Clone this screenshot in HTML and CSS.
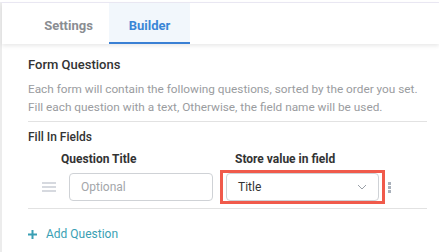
FILE: index.html
```html
<!DOCTYPE html>
<html lang="en">
<head>
    <meta charset="utf-8" />
    <meta name="viewport" content="width=device-width, initial-scale=1" />
    <title>Form Builder</title>
    <link rel="stylesheet" href="styles.css">
</head>
<body>

<div class="page">
    <div class="tabs">
        <div class="tab">Settings</div>
        <div class="tab active">Builder</div>
    </div>

    <div class="content">
        <div class="section">
            <h2 class="section-title">Form Questions</h2>
            <p class="section-desc">Each form will contain the following questions, sorted by the order you set.<br>Fill each question with a text, Otherwise, the field name will be used.</p>
        </div>

        <div class="fields">
            <h3 class="fields-title">Fill In Fields</h3>
            <div class="fields-head">
                <span class="head-question">Question Title</span>
                <span class="head-store">Store value in field</span>
            </div>
            <div class="field-row">
                <span class="drag-handle"><i></i><i></i><i></i></span>
                <input class="text-input" type="text" placeholder="Optional">
                <div class="highlight">
                    <div class="select">
                        <span>Title</span>
                        <svg width="10" height="6" viewBox="0 0 10 6"><path d="M1 1l4 4 4-4" fill="none" stroke="#9aa0a8" stroke-width="1"/></svg>
                    </div>
                </div>
                <span class="kebab"><i></i><i></i><i></i></span>
            </div>
        </div>

        <div class="add-question">
            <svg width="9" height="9" viewBox="0 0 9 9"><path d="M4.5 0v9M0 4.5h9" stroke="#3a9fb4" stroke-width="2"/></svg>
            <span>Add Question</span>
        </div>
    </div>
</div>

</body>
</html>
```

FILE: styles.css
```css
* {
    margin: 0;
    padding: 0;
    box-sizing: border-box;
}

html, body {
    width: 100%;
    height: 100%;
}

body {
    background-color: white;
    font-family: Roboto, "Liberation Sans", sans-serif;
    color: #333;
    overflow: hidden;
}

.page {
    margin-top: 2px;
    height: 250px;
    border-top: 1px solid #ebe9f4;
    border-left: 2px solid #ececec;
}

.tabs {
    display: flex;
    padding-left: 26px;
    box-shadow: 0 2px 4px rgba(0, 0, 0, 0.09);
}

.tab {
    width: 81px;
    height: 41px;
    padding-top: 6px;
    line-height: 33px;
    text-align: center;
    font-size: 13px;
    font-weight: 700;
    color: #8a8d92;
    border-bottom: 2px solid transparent;
}

.tab.active {
    background-color: #f2f7fc;
    color: #3a86d6;
    border-bottom-color: #3a80d4;
}

.content {
    padding: 0 12px 0 26px;
}

.section {
    padding: 12px 0 5px;
    border-bottom: 1px solid #e2e2e2;
}

.section-title {
    font-size: 13px;
    font-weight: 500;
    line-height: 18px;
    color: #333;
}

.section-desc {
    margin-top: 6px;
    font-size: 11.8px;
    line-height: 18px;
    color: #9a9ca0;
}

.fields {
    padding: 7px 0 4px;
    border-bottom: 1px solid #e2e2e2;
}

.fields-title {
    font-size: 12px;
    font-weight: 500;
    line-height: 16px;
    color: #333;
}

.fields-head {
    display: flex;
    padding-left: 33px;
    margin-top: 6px;
    font-size: 12px;
    font-weight: 700;
    line-height: 16px;
}

.head-question {
    width: 174px;
}

.field-row {
    display: flex;
    align-items: center;
    padding-left: 14px;
    margin-top: 3px;
}

.drag-handle {
    display: flex;
    flex-direction: column;
    gap: 2px;
    width: 14px;
}

.drag-handle i {
    display: block;
    height: 2px;
    background-color: #d6d9df;
}

.text-input {
    width: 144px;
    height: 28px;
    margin-left: 13px;
    padding: 0 11px;
    border: 1px solid #cfd2d6;
    border-radius: 4px;
    font-family: inherit;
    font-size: 12px;
    color: #333;
    outline: none;
}

.text-input::placeholder {
    color: #a3a6aa;
}

.highlight {
    margin-left: 7px;
    padding: 0 3px;
    border: 3px solid #f05a4b;
}

.select {
    display: flex;
    align-items: center;
    justify-content: space-between;
    width: 153px;
    height: 28px;
    padding: 0 11px;
    border: 1px solid #cfd2d6;
    border-radius: 4px;
    font-size: 12px;
    color: #333;
}

.kebab {
    display: flex;
    flex-direction: column;
    gap: 1px;
    margin-left: 3px;
}

.kebab i {
    display: block;
    width: 3px;
    height: 3px;
    background-color: #a9b0ba;
}

.add-question {
    display: flex;
    align-items: center;
    gap: 9px;
    padding-top: 18px;
    font-size: 12px;
    color: #3a9fb4;
}
```
